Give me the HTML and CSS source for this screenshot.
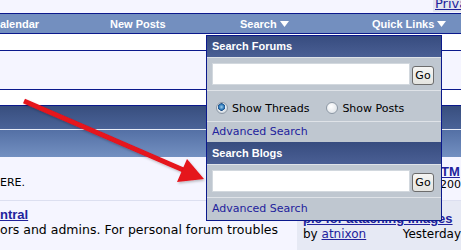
FILE: index.html
```html
<!DOCTYPE html>
<html>
<head>
<meta charset="utf-8">
<link rel="stylesheet" href="styles.css">
</head>
<body>
<div class="page">
  <div class="topbar"><a class="pm" href="#">Private Messages</a></div>
  <div class="navbar">
    <a class="nav-item nav-cal" href="#">Calendar</a>
    <a class="nav-item nav-new" href="#">New Posts</a>
    <a class="nav-item nav-search" href="#">Search <svg class="caret" width="9" height="6" viewBox="0 0 9 6"><path d="M0 0H9L4.5 6Z" fill="#fff"/></svg></a>
    <a class="nav-item nav-quick" href="#">Quick Links <svg class="caret" width="9" height="6" viewBox="0 0 9 6"><path d="M0 0H9L4.5 6Z" fill="#fff"/></svg></a>
  </div>
  <div class="strip"></div>
  <div class="gap"></div>
  <div class="strip strip-top"></div>
  <div class="tcat">
    <div class="tcat-a"></div>
    <div class="tcat-b"></div>
  </div>
  <div class="frow">
    <div class="fleft"><span class="desc-first">ERE.</span></div>
    <div class="fright fright-1">
      <a class="ttl" href="#">OTM</a>
      <span class="date">2007</span>
    </div>
  </div>
  <div class="frow frow-2">
    <div class="fleft fleft-2">
      <a class="fname" href="#">ntral</a>
      <span class="desc">ors and admins. For personal forum troubles</span>
    </div>
    <div class="fright fright-2">
      <a class="ttl" href="#">pic for attaching images</a>
      <div class="byline"><span class="by">by <a href="#">atnixon</a></span><span>Yesterday</span></div>
    </div>
  </div>
</div>

<svg class="arrow" width="461" height="250" viewBox="0 0 461 250">
  <defs>
    <filter id="sh" x="-10%" y="-10%" width="120%" height="130%">
      <feDropShadow dx="1" dy="1.5" stdDeviation="1" flood-color="#000" flood-opacity="0.25"/>
    </filter>
  </defs>
  <g filter="url(#sh)">
    <line x1="24" y1="101" x2="188" y2="172" stroke="#e5121b" stroke-width="5"/>
    <polygon points="204,179 187,159 177,182" fill="#e5121b"/>
  </g>
</svg>

<div class="popup">
  <div class="pop-head">Search Forums</div>
  <div class="pop-row pop-input">
    <input class="q" type="text">
    <button class="go" type="button">Go</button>
  </div>
  <div class="pop-row pop-radios">
    <label class="rad"><input type="radio" name="sh" checked><span>Show Threads</span></label>
    <label class="rad rad-2"><input type="radio" name="sh"><span>Show Posts</span></label>
  </div>
  <div class="pop-row pop-link"><a href="#">Advanced Search</a></div>
  <div class="pop-head pop-head-2">Search Blogs</div>
  <div class="pop-row pop-input">
    <input class="q" type="text">
    <button class="go" type="button">Go</button>
  </div>
  <div class="pop-row pop-link pop-link-last"><a href="#">Advanced Search</a></div>
</div>
</body>
</html>
```
FILE: styles.css
```css
html, body {
  margin: 0;
  padding: 0;
}
body {
  background: #f5f5ff;
  font-family: "DejaVu Sans", Verdana, sans-serif;
  font-size: 11px;
  color: #000;
  width: 461px;
  height: 250px;
  overflow: hidden;
  position: relative;
}
a { color: #22229c; }

.page {
  display: flex;
  flex-direction: column;
}

.topbar {
  height: 13px;
  display: flex;
  justify-content: flex-end;
  overflow: hidden;
}
.pm {
  width: 26px;
  padding-left: 2px;
  height: 12px;
  background: #e3e5ef;
  white-space: nowrap;
  overflow: hidden;
  line-height: 7px;
  font-size: 13px;
  display: block;
  text-decoration: underline;
}

.navbar {
  height: 19px;
  border-top: 1px solid #0b198c;
  border-bottom: 1px solid #0b198c;
  background: #738fbf;
  display: flex;
  align-items: center;
  font-family: "Liberation Sans", Arial, sans-serif;
  font-weight: bold;
  font-size: 11px;
  white-space: nowrap;
}
.nav-item {
  color: #fff;
  text-decoration: none;
  display: flex;
  align-items: center;
}
.caret { margin-left: 3px; margin-top: 1px; }
.nav-cal { width: 118px; margin-left: -8px; }
.nav-new { width: 130px; }
.nav-search { width: 132px; }

.strip {
  height: 16px;
  background: #fff;
  border-bottom: 1px solid #0b198c;
}
.gap { height: 38px; }
.strip-top {
  height: 15px;
  border-top: 1px solid #0b198c;
}
.tcat { display: flex; flex-direction: column; }
.tcat-a {
  height: 23px;
  background: linear-gradient(#384e7e, #4a6398);
  border-bottom: 1px solid #e8ecf6;
}
.tcat-b {
  height: 27px;
  background: linear-gradient(#5470a5, #7390c1);
}

.frow {
  display: flex;
  height: 43px;
  border-bottom: 1px solid #dcdff0;
}
.frow-2 { height: 49px; border-bottom: 0; }
.fleft {
  width: 297px;
  padding-top: 19px;
  box-sizing: border-box;
}
.fleft-2 {
  padding-top: 6px;
  display: flex;
  flex-direction: column;
}
.desc-first { line-height: 13px; display: block; }
.desc {
  font-size: 12.5px;
  line-height: 16px;
  white-space: nowrap;
}
.fname, .ttl {
  font-family: "Liberation Sans", Arial, sans-serif;
  font-weight: bold;
  font-size: 13px;
  line-height: 15px;
}
.fname { align-self: flex-start; }
.fright {
  flex: 1;
  display: flex;
  flex-direction: column;
  white-space: nowrap;
  overflow: hidden;
}
.fright-1 { padding: 8px 0 0 134px; }
.fright-1 .ttl { line-height: 14px; }
.fright-1 .date { line-height: 12px; margin-left: 9px; }
.fright-2 {
  background: #e6e9f4;
  padding: 10px 0 0 6px;
}
.byline {
  display: flex;
  font-size: 12px;
  line-height: 15px;
  margin-top: 1px;
}
.by { width: 107px; }

.arrow {
  position: absolute;
  left: 0;
  top: 0;
  pointer-events: none;
  z-index: 2;
}

.popup {
  position: absolute;
  left: 206px;
  top: 35px;
  width: 234px;
  border: 1px solid #0b198c;
  background: #bfc7d0;
  z-index: 3;
  display: flex;
  flex-direction: column;
}
.pop-head {
  height: 21px;
  line-height: 21px;
  padding-left: 5px;
  background: linear-gradient(#374c7f, #4a5f94);
  color: #fff;
  font-family: "Liberation Sans", Arial, sans-serif;
  font-weight: bold;
  font-size: 11px;
}
.pop-head-2 { height: 22px; line-height: 22px; }
.pop-row {
  border-top: 1px solid #dfe3e8;
}
.pop-input {
  display: flex;
  align-items: flex-end;
  padding: 5px 0 5px 5px;
}
.q {
  width: 198px;
  height: 22px;
  box-sizing: border-box;
  margin: 0;
  border: 1px solid #d2d8de;
  background: #fff;
  outline: none;
}
.go {
  margin: 0 0 0 2px;
  width: 22px;
  height: 19px;
  padding: 0;
  box-sizing: border-box;
  border: 1px solid #6c6c6c;
  border-radius: 3px;
  background: linear-gradient(#f6f6f4, #e4e4e0);
  font-family: "DejaVu Sans", Verdana, sans-serif;
  font-size: 11px;
  color: #000;
}
.pop-radios {
  display: flex;
  align-items: center;
  padding: 4px 0 0 9px;
  box-sizing: border-box;
  height: 31px;
}
.rad {
  display: flex;
  align-items: center;
}
.rad-2 { margin-left: 17px; }
.rad input {
  appearance: none;
  -webkit-appearance: none;
  width: 12px;
  height: 12px;
  margin: 0 4px 0 0;
  border: 1px solid #8d98a5;
  border-radius: 50%;
  background: radial-gradient(circle at 40% 35%, #ffffff, #d9dee4);
  box-sizing: border-box;
}
.rad input:checked {
  background: radial-gradient(circle at 45% 40%, #9fd0f0 0, #2f79b8 2.5px, #1f4f86 3.5px, #e8edf2 4px, #d0d7de 6px);
}
.pop-link {
  height: 20px;
  line-height: 20px;
  padding-left: 5px;
}
.pop-link a { text-decoration: none; color: #22229c; }
.pop-link-last { height: 22px; line-height: 22px; }
```
